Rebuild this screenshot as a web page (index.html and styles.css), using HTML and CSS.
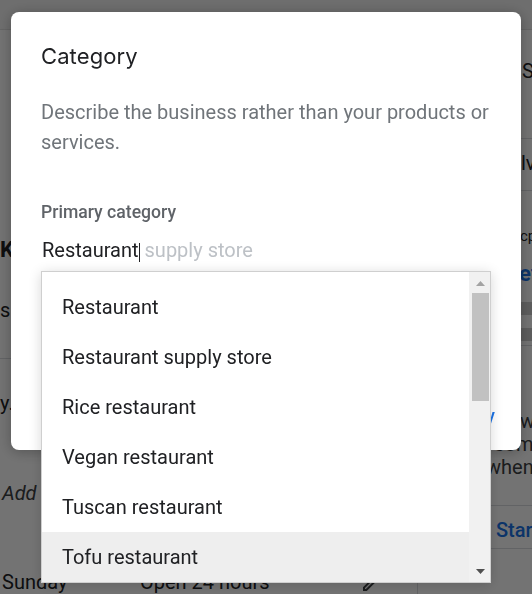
FILE: index.html
```html
<!DOCTYPE html>
<html lang="en">
<head>
<meta charset="utf-8">
<title>Category</title>
<link rel="stylesheet" href="styles.css">
</head>
<body>
<div class="page">
  <header class="topbar"></header>
  <div class="main">
    <section class="left">
      <h3 class="l-heading">Key info</h3>
      <p class="l-since">since 2010</p>
      <hr class="rule l-rule">
      <p class="l-y">y. Your hours</p>
      <p class="l-add">Add special hours</p>
      <div class="l-hours">
        <span class="day">Sunday</span>
        <span class="time">Open 24 hours</span>
        <svg class="pencil" viewBox="0 0 24 24" width="24" height="24"><path d="M14.06 9.02l.92.92L5.92 19H5v-.92l9.06-9.06M17.66 3c-.25 0-.51.1-.7.29l-1.83 1.83 3.75 3.75 1.83-1.83c.39-.39.39-1.02 0-1.41l-2.34-2.34c-.2-.2-.45-.29-.71-.29zm-3.6 3.19L3 17.25V21h3.75L17.81 9.94l-3.75-3.75z"/></svg>
      </div>
    </section>
    <aside class="right">
      <p class="r-s">Suggestions</p>
      <hr class="rule r-rule1">
      <p class="r-lv">lv</p>
      <hr class="rule r-rule2">
      <p class="r-cp">cp</p>
      <p class="r-et">et</p>
      <div class="bar bar1"></div>
      <div class="bar bar2"></div>
      <hr class="rule r-rule3">
      <div class="r-para">
        <span class="ln ln1">w</span>
        <span class="ln ln2">comp</span>
        <span class="ln ln3">when y</span>
      </div>
      <hr class="rule r-rule4">
      <p class="r-start">Start</p>
      <hr class="rule r-rule5">
    </aside>
  </div>
</div>

<div class="scrim"></div>

<div class="dialog" role="dialog" aria-labelledby="dlg-title">
  <h2 class="title" id="dlg-title">Category</h2>
  <p class="desc">Describe the business rather than your products or services.</p>
  <div class="label">Primary category</div>
  <div class="input"><span class="typed">Restaurant</span><span class="caret"></span> <span class="hint">supply store</span></div>
  <div class="footer">
    <button class="btn">Cancel</button>
    <button class="btn">Apply</button>
  </div>

  <div class="listbox" role="listbox">
    <ul class="options">
      <li class="option">Restaurant</li>
      <li class="option">Restaurant supply store</li>
      <li class="option">Rice restaurant</li>
      <li class="option">Vegan restaurant</li>
      <li class="option">Tuscan restaurant</li>
      <li class="option active">Tofu restaurant</li>
      <li class="option">Thai restaurant</li>
      <li class="option">Taco restaurant</li>
    </ul>
    <div class="scrollbar">
      <div class="sb-btn sb-up"><svg viewBox="0 0 21 21" width="21" height="21"><polygon points="7,14 16,14 11.5,9"/></svg></div>
      <div class="sb-thumb"></div>
      <div class="sb-track"></div>
      <div class="sb-btn sb-down"><svg viewBox="0 0 21 21" width="21" height="21"><polygon points="7,8 16,8 11.5,13"/></svg></div>
    </div>
  </div>
</div>
</body>
</html>
```
FILE: styles.css
```css
* { box-sizing: border-box; }

html, body {
  margin: 0;
  padding: 0;
  width: 532px;
  height: 594px;
  overflow: hidden;
}

body {
  font-family: Roboto, "Noto Sans", Arial, sans-serif;
  color: #202124;
  background: #ffffff;
  position: relative;
}

p, h2, h3, ul { margin: 0; padding: 0; }

/* ---------- underlying page ---------- */
.topbar {
  height: 30px;
  background: #f3f3f3;
  border-bottom: 1px solid #e0e0e0;
}

.main {
  display: grid;
  grid-template-columns: 417px 115px;
  height: 564px;
}

.left {
  padding-left: 2px;
  white-space: nowrap;
  overflow: hidden;
}

.rule {
  border: 0;
  height: 1px;
  background: #dadce0;
  margin: 0;
}

.l-heading {
  margin-top: 206px;
  font-size: 22px;
  line-height: 28px;
  font-weight: 700;
  margin-left: -2px;
}
.l-since {
  margin-top: 34px;
  font-size: 20px;
  line-height: 24px;
  margin-left: -2px;
}
.l-rule { margin-top: 36px; margin-left: -2px; }
.l-y {
  margin-top: 32px;
  font-size: 20px;
  line-height: 24px;
  margin-left: -2px;
}
.l-add {
  margin-top: 66px;
  font-size: 20px;
  line-height: 24px;
  font-style: italic;
  color: #3c4043;
}
.l-hours {
  margin-top: 65px;
  display: flex;
  align-items: flex-start;
  font-size: 20px;
  line-height: 24px;
}
.l-hours .day { width: 138px; }
.l-hours .time { width: 220px; }
.pencil { margin-top: 0; fill: #3c4043; }

.right {
  border-left: 1px solid #dadce0;
  white-space: nowrap;
  overflow: hidden;
  font-size: 20px;
  line-height: 24px;
}
.r-s { margin-top: 29px; padding-left: 104px; }
.r-rule1 { margin-top: 55px; }
.r-lv { margin-top: 12px; padding-left: 103px; }
.r-rule2 { margin-top: 15px; }
.r-cp {
  margin-top: 35px;
  padding-left: 102px;
  font-size: 15px;
  line-height: 20px;
}
.r-et {
  margin-top: 14px;
  padding-left: 101px;
  font-size: 22px;
  line-height: 28px;
  font-weight: 700;
  color: #1a73e8;
}
.bar {
  height: 13px;
  background: #cfcfcf;
  margin-left: 60px;
}
.bar1 { margin-top: 14px; }
.bar2 { margin-top: 13px; }
.r-rule3 { margin-top: 4px; }
.r-para {
  margin-top: 64px;
  display: flex;
  flex-direction: column;
  line-height: 23px;
  color: #3c4043;
}
.ln1 { padding-left: 102px; }
.ln2 { padding-left: 76px; }
.ln3 { padding-left: 68px; }
.r-rule4 { margin-top: 26px; }
.r-start {
  margin-top: 12px;
  padding-left: 78px;
  font-weight: 500;
  color: #1a73e8;
}
.r-rule5 { margin-top: 6px; }

/* ---------- scrim ---------- */
.scrim {
  position: fixed;
  inset: 0;
  background: rgba(0, 0, 0, 0.55);
}

/* ---------- dialog ---------- */
.dialog {
  position: fixed;
  left: 11px;
  top: 12px;
  width: 510px;
  height: 438px;
  background: #ffffff;
  border-radius: 8px;
  box-shadow: 0 2px 14px rgba(0, 0, 0, 0.28);
  padding: 30px 30px 24px;
  display: flex;
  flex-direction: column;
}

.title {
  font-family: Inter, "Open Sans", sans-serif;
  font-size: 22px;
  line-height: 28px;
  font-weight: 400;
  color: #202124;
  letter-spacing: 0.1px;
}

.desc {
  margin-top: 27px;
  font-size: 20px;
  line-height: 30px;
  color: #70757a;
}

.label {
  margin-top: 45px;
  font-size: 17.6px;
  line-height: 20px;
  font-weight: 500;
  color: #5f6368;
}

.input {
  margin-top: 16px;
  margin-left: 1px;
  font-size: 20px;
  line-height: 24px;
  color: #202124;
  white-space: nowrap;
}
.caret {
  display: inline-block;
  width: 1px;
  height: 19px;
  background: #202124;
  vertical-align: -5px;
}
.hint { color: #bdc1c6; }

.footer {
  margin-top: auto;
  margin-right: -4px;
  display: flex;
  justify-content: flex-end;
  gap: 24px;
}
.btn {
  border: 0;
  background: none;
  padding: 0;
  font-family: Roboto, sans-serif;
  font-size: 17.6px;
  line-height: 20px;
  font-weight: 500;
  color: #1a73e8;
}

/* ---------- listbox ---------- */
.listbox {
  position: absolute;
  left: 30px;
  top: 259px;
  width: 450px;
  height: 312px;
  background: #ffffff;
  border: 1px solid #cfcfcf;
  box-shadow: 0 2px 12px rgba(0, 0, 0, 0.16);
  display: flex;
}

.options {
  list-style: none;
  flex: 1;
  padding-top: 10px;
  overflow: hidden;
}
.option {
  height: 50px;
  line-height: 50px;
  padding-left: 20px;
  font-size: 20px;
  color: #202124;
  white-space: nowrap;
}
.option.active { background: #eeeeee; }

.scrollbar {
  width: 21px;
  background: #f1f1f1;
  display: flex;
  flex-direction: column;
}
.sb-btn { height: 21px; }
.sb-btn svg { display: block; }
.sb-up polygon { fill: #a3a3a3; }
.sb-down polygon { fill: #505050; }
.sb-thumb {
  height: 108px;
  margin: 0 1px 0 3px;
  background: #c1c1c1;
}
.sb-track { flex: 1; }
```
